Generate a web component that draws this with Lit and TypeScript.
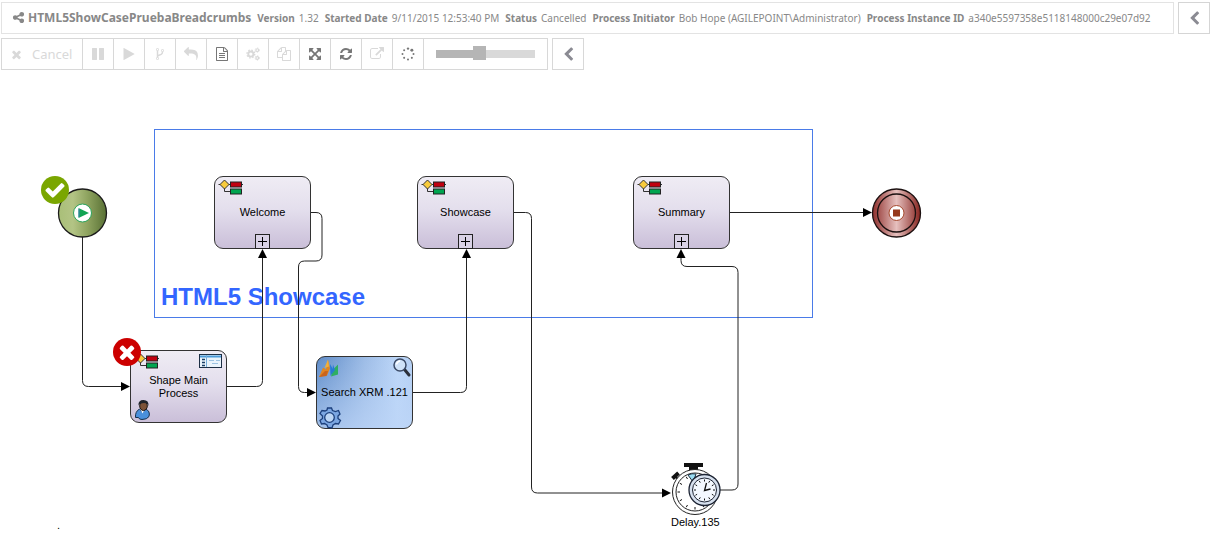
import { LitElement, html, css, svg, nothing } from "lit";
import { customElement, property, state } from "lit/decorators.js";
import { classMap } from "lit/directives/class-map.js";

const GLYPHS: Record<string, unknown> = {
  share: svg`<path d="M1344 1024q133 0 226.500 93.500t93.500 226.500-93.500 226.500-226.500 93.500-226.500-93.500-93.500-226.500q0-12 2-34l-360-180q-92 86-218 86-133 0-226.500-93.500t-93.500-226.500 93.500-226.500 226.500-93.500q126 0 218 86l360-180q-2-22-2-34 0-133 93.500-226.500t226.500-93.500 226.500 93.500 93.500 226.500-93.500 226.500-226.500 93.500q-126 0-218-86l-360 180q2 22 2 34t-2 34l360 180q92-86 218-86z"/>`,
  times: svg`<path d="M1490 1322q0 40-28 68l-136 136q-28 28-68 28t-68-28l-294-294-294 294q-28 28-68 28t-68-28l-136-136q-28-28-28-68t28-68l294-294-294-294q-28-28-28-68t28-68l136-136q28-28 68-28t68 28l294 294 294-294q28-28 68-28t68 28l136 136q28 28 28 68t-28 68l-294 294 294 294q28 28 28 68z"/>`,
  pause: svg`<path d="M1664 192v1408q0 26-19 45t-45 19h-512q-26 0-45-19t-19-45v-1408q0-26 19-45t45-19h512q26 0 45 19t19 45zm-896 0v1408q0 26-19 45t-45 19h-512q-26 0-45-19t-19-45v-1408q0-26 19-45t45-19h512q26 0 45 19t19 45z"/>`,
  play: svg`<path d="M1576 927l-1328 738q-23 13-39.500 3t-16.500-36v-1472q0-26 16.500-36t39.500 3l1328 738q23 13 23 31t-23 31z"/>`,
  fork: svg`<path d="M672 1472q0-40-28-68t-68-28-68 28-28 68 28 68 68 28 68-28 28-68zm0-1152q0-40-28-68t-68-28-68 28-28 68 28 68 68 28 68-28 28-68zm640 128q0-40-28-68t-68-28-68 28-28 68 28 68 68 28 68-28 28-68zm96 0q0 52-26 96.500t-70 69.500q-2 287-226 414-67 38-203 81-128 40-169.500 71t-41.500 100v26q44 25 70 69.500t26 96.500q0 80-56 136t-136 56-136-56-56-136q0-52 26-96.500t70-69.500v-820q-44-25-70-69.500t-26-96.500q0-80 56-136t136-56 136 56 56 136q0 52-26 96.500t-70 69.500v497q54-26 154-57 55-17 87.500-29.500t70.500-31 59-39.500 40.500-51 28-69.500 8.500-91.500q-44-25-70-69.500t-26-96.500q0-80 56-136t136-56 136 56 56 136z"/>`,
  reply: svg`<path d="M1792 1120q0 166-127 451-3 7-10.500 24t-13.500 30-13 22q-12 17-28 17-15 0-23.500-10t-8.500-25q0-9 2.500-26.500t2.500-23.500q5-68 5-123 0-112-19.500-200.500t-54-153.500-89-112-115-78-138.500-49-153.500-24.500-166.500-7.500h-224v256q0 26-19 45t-45 19-45-19l-512-512q-19-19-19-45t19-45l512-512q19-19 45-19t45 19 19 45v256h224q713 0 875 403 53 134 53 333z"/>`,
  file: svg`<path d="M1596 380q28 28 48 76t20 88v1152q0 40-28 68t-68 28h-1344q-40 0-68-28t-28-68v-1600q0-40 28-68t68-28h896q40 0 88 20t76 48zm-444-244v376h376q-10-29-22-41l-313-313q-12-12-41-22zm384 1528v-1024h-416q-40 0-68-28t-28-68v-416h-768v1536h1280zm-1024-864q0-14 9-23t23-9h704q14 0 23 9t9 23v64q0 14-9 23t-23 9h-704q-14 0-23-9t-9-23v-64zm736 224q14 0 23 9t9 23v64q0 14-9 23t-23 9h-704q-14 0-23-9t-9-23v-64q0-14 9-23t23-9h704zm0 256q14 0 23 9t9 23v64q0 14-9 23t-23 9h-704q-14 0-23-9t-9-23v-64q0-14 9-23t23-9h704z"/>`,
  cogs: svg`<g fill="none" stroke="currentColor">
    <circle cx="620" cy="900" r="330" stroke-width="240"/><circle cx="620" cy="900" r="500" stroke-width="170" stroke-dasharray="196 196.700"/>
    <circle cx="1440" cy="400" r="175" stroke-width="150"/><circle cx="1440" cy="400" r="280" stroke-width="100" stroke-dasharray="147 146.200"/>
    <circle cx="1440" cy="1400" r="175" stroke-width="150"/><circle cx="1440" cy="1400" r="280" stroke-width="100" stroke-dasharray="147 146.200"/></g>`,
  files: svg`<path d="M1696 384q40 0 68 28t28 68v1216q0 40-28 68t-68 28h-960q-40 0-68-28t-28-68v-288h-544q-40 0-68-28t-28-68v-672q0-40 20-88t48-76l408-408q28-28 76-48t88-20h416q40 0 68 28t28 68v328q68-40 128-40h416zm-544 213l-299 299h299v-299zm-640-384l-299 299h299v-299zm196 647l316-316v-416h-384v416q0 40-28 68t-68 28h-416v640h512v-256q0-40 20-88t48-76zm956 804v-1152h-384v416q0 40-28 68t-68 28h-416v640h896z"/>`,
  expand: svg`<path d="M1411 541l-355 355 355 355 144-144q29-31 70-14 39 17 39 59v448q0 26-19 45t-45 19h-448q-42 0-59-40-17-39 14-69l144-144-355-355-355 355 144 144q31 30 14 69-17 40-59 40h-448q-26 0-45-19t-19-45v-448q0-42 40-59 39-17 69 14l144 144 355-355-355-355-144 144q-19 19-45 19-12 0-24-5-40-17-40-59v-448q0-26 19-45t45-19h448q42 0 59 40 17 39-14 69l-144 144 355 355 355-355-144-144q-31-30-14-69 17-40 59-40h448q26 0 45 19t19 45v448q0 42-39 59-13 5-25 5-26 0-45-19z"/>`,
  refresh: svg`<path d="M1639 1056q0 5-1 7-64 268-268 434.500t-478 166.500q-146 0-282.500-55t-243.500-157l-129 129q-19 19-45 19t-45-19-19-45v-448q0-26 19-45t45-19h448q26 0 45 19t19 45-19 45l-137 137q71 66 161 102t187 36q134 0 250-65t186-179q11-17 53-117 8-23 30-23h192q13 0 22.500 9.500t9.500 22.500zm25-800v448q0 26-19 45t-45 19h-448q-26 0-45-19t-19-45 19-45l138-138q-148-137-349-137-134 0-250 65t-186 179q-11 17-53 117-8 23-30 23h-199q-13 0-22.500-9.500t-9.500-22.500v-7q65-268 270-434.500t480-166.500q146 0 284 55.500t245 156.500l130-129q19-19 45-19t45 19 19 45z"/>`,
  external: svg`<path d="M1408 928v320q0 119-84.500 203.500t-203.500 84.500h-832q-119 0-203.500-84.500t-84.500-203.500v-832q0-119 84.500-203.500t203.500-84.500h704q14 0 23 9t9 23v64q0 14-9 23t-23 9h-704q-66 0-113 47t-47 113v832q0 66 47 113t113 47h832q66 0 113-47t47-113v-320q0-14 9-23t23-9h64q14 0 23 9t9 23zm384-864v512q0 26-19 45t-45 19-45-19l-176-176-652 652q-10 10-23 10t-23-10l-114-114q-10-10-10-23t10-23l652-652-176-176q-19-19-19-45t19-45 45-19h512q26 0 45 19t19 45z"/>`,
  spinner: svg`<circle cx="896" cy="200" r="150"/><circle cx="1390" cy="402" r="190"/><circle cx="1600" cy="896" r="130"/><circle cx="1390" cy="1390" r="130"/><circle cx="896" cy="1600" r="130"/><circle cx="402" cy="1390" r="130"/><circle cx="192" cy="896" r="130"/><circle cx="402" cy="402" r="130"/>`,
  chevron: svg`<path d="M1427 301l-531 531 531 531q19 19 19 45t-19 45l-166 166q-19 19-45 19t-45-19l-742-742q-19-19-19-45t19-45l742-742q19-19 45-19t45 19l166 166q19 19 19 45t-19 45z"/>`,
  check: svg`<path d="M1671 566q0 40-28 68l-724 724-136 136q-28 28-68 28t-68-28l-136-136-362-362q-28-28-28-68t28-68l136-136q28-28 68-28t68 28l294 295 656-657q28-28 68-28t68 28l136 136q28 28 28 68z"/>`,
};

const glyph = (name: string) =>
  html`<svg class="glyph" viewBox="0 0 1792 1792" aria-hidden="true">${GLYPHS[name]}</svg>`;

interface Tool {
  icon: string;
  title: string;
  text?: string;
  off?: boolean;
}

const TOOLS: Tool[] = [
  { icon: "times", title: "Cancel", text: "Cancel", off: true },
  { icon: "pause", title: "Suspend", off: true },
  { icon: "play", title: "Resume", off: true },
  { icon: "fork", title: "Migrate", off: true },
  { icon: "reply", title: "Rollback", off: true },
  { icon: "file", title: "Details" },
  { icon: "cogs", title: "Settings", off: true },
  { icon: "files", title: "Copy", off: true },
  { icon: "expand", title: "Fit" },
  { icon: "refresh", title: "Refresh" },
  { icon: "external", title: "Open", off: true },
  { icon: "spinner", title: "Status" },
];

const FACTS: [string, string][] = [
  ["Version", "1.32"],
  ["Started Date", "9/11/2015 12:53:40 PM"],
  ["Status", "Cancelled"],
  ["Process Initiator", "Bob Hope (AGILEPOINT\\Administrator)"],
  ["Process Instance ID", "a340e5597358e5118148000c29e07d92"],
];

interface Activity {
  label: string;
  x: number;
  y: number;
  kind: "sub" | "form" | "search";
}

const ACTIVITIES: Activity[] = [
  { label: "Welcome", x: 214, y: 106, kind: "sub" },
  { label: "Showcase", x: 417, y: 106, kind: "sub" },
  { label: "Summary", x: 633, y: 106, kind: "sub" },
  { label: "Shape Main Process", x: 130, y: 280, kind: "form" },
  { label: "Search XRM .121", x: 316, y: 286, kind: "search" },
];

const LINKS = [
  "M82.500 167V310.500q0 6 6 6H122",
  "M227 316.500H256.500q6 0 6-6V187",
  "M311 142.500H316q6 0 6 6V185q0 6-6 6H304.500q-6 0-6 6V316.500q0 6 6 6H308",
  "M413 322.500H460.500q6 0 6-6V187",
  "M514 142.500H525.500q6 0 6 6V417q0 6 6 6H663",
  "M720 420H732q6 0 6-6V202.500q0-6-6-6H687q-6 0-6-6V187",
  "M730 142.500H864",
];

const flowMark = svg`<path class="ink" d="M4.500 8.500H29M10.500 8.500V15.500H16"/>
  <path d="M10.500 4L15 8.500 10.500 13 6 8.500z" fill="#f8cb3c" stroke="#333"/>
  <rect x="16.500" y="6" width="11" height="5" fill="#c00010" stroke="#222"/>
  <rect x="16.500" y="13" width="11" height="5" fill="#00a550" stroke="#222"/>`;

const formMark = svg`<rect x="69.500" y="4.500" width="22" height="13" fill="#eaf4fc" stroke="#1d2f45"/>
  <path d="M70 6.500H91" stroke="#4b9bd8" stroke-width="2"/>
  <path d="M72 9.500H75M72 12.500H75M72 15.500H75" stroke="#1b3f66" stroke-width="1.500"/>
  <path d="M76.500 5V17" stroke="#76aeda"/><path d="M79 10.500H84M86 10.500H90M82 13.500H88" stroke="#9cc3e2"/>
  <path d="M5.500 67.500q-.5-6 4-8.500l3 3 3-3q5 2 3.500 7.500-2 3-7 3-3 0-3.500-2z" fill="#4a90dc" stroke="#16304d"/>
  <path d="M10.500 59l2 4.500 2.500-4.500z" fill="#fff"/>
  <ellipse cx="13.500" cy="56" rx="3.800" ry="4.500" fill="#7d5338" stroke="#1c1410"/>
  <path d="M8.500 55.500q-.5-5.500 5-5.500 5.500 0 5 6-1-3-4.500-3-4 0-5.500 2.500z" fill="#20242b"/>`;

const searchMark = svg`<path d="M3 21L7 11.500l3 2L12 3.500l2 9-3 7z" fill="#e2861f"/><path d="M3 21L9 15l3 0-1.500 5z" fill="#c9641c"/>
  <path d="M8.500 12L12 3.500l1 7z" fill="#f2b03a"/><path d="M14 8l4 7-3.500 5z" fill="#2779d6"/>
  <path d="M15 20.500l2-7 5-5V18.500z" fill="#2fae62"/><path d="M17 8.500L19 14l-3 4z" fill="#2779d6"/>
  <path d="M88.500 13.500l4.500 5.500" stroke="#2b2f3a" stroke-width="3" stroke-linecap="round"/>
  <circle cx="84" cy="9" r="6" fill="#cfe2f8" stroke="#3b4a66" stroke-width="1.500"/>
  <path d="M80.500 8.500q.5-3 3.500-3.500" fill="none" stroke="#fff" stroke-width="1.500"/>
  <path d="M11.500 52l4 0 1 2.500 3 1 3-1 1.500 3.500-2 2 0 2.500 2.500 2-2 3.500-3-.5-2.500 1.500-1 3-4-.5-1-2.500-2.500-1.500-3 .5-1.500-3.500 2.500-2 0-2.500-2.500-2.500 2-3 3 .5 2-1z" fill="#7ba6e2" stroke="#1c3f7c" stroke-width="1.300"/>
  <circle cx="13.500" cy="61.500" r="4.800" fill="#bcd5f5" stroke="#1c3f7c" stroke-width="1.300"/>`;

const MARKS = { sub: flowMark, form: svg`${flowMark}${formMark}`, search: searchMark };

@customElement("process-bar")
class ProcessBar extends LitElement {
  static styles = css`
    :host { display: flex; gap: 4px; align-items: stretch; }
    .info {
      flex: 1; display: flex; align-items: center; gap: 6px; min-width: 0; min-height: 32px;
      box-sizing: border-box; padding: 0 10px; border: 1px solid #e3e3e3; white-space: nowrap;
      color: #888;
    }
    .name { margin: 0; font-size: 12px; font-weight: 700; line-height: 20px; color: #888; }
    .name .glyph { width: 13px; height: 13px; margin-right: 3px; vertical-align: -2px; }
    .glyph { fill: currentColor; }
    .fact { display: flex; align-items: baseline; gap: 4px; font-size: 10px; line-height: 20px; }
    .key { font-weight: 700; }
    .fold {
      width: 32px; padding: 0; border: 1px solid #d5d5d5; background: #fff; color: #8b8b93;
      display: grid; place-items: center;
    }
    .fold .glyph { width: 15px; height: 15px; }
  `;

  render() {
    return html`
      <div class="info">
        <h1 class="name">${glyph("share")}HTML5ShowCasePruebaBreadcrumbs</h1>
        ${FACTS.map(([k, v]) => html`<span class="fact"><span class="key">${k}</span><span>${v}</span></span>`)}
      </div>
      <button class="fold" aria-label="Collapse details">${glyph("chevron")}</button>
    `;
  }
}

@customElement("tool-bar")
class ToolBar extends LitElement {
  @state() private zoom = 43;

  static styles = css`
    :host { display: flex; gap: 4px; }
    .strip { display: flex; }
    .tool, .zoom, .fold {
      box-sizing: border-box; height: 32px; border: 1px solid #d8d8d8; background: #fff;
      display: flex; align-items: center; justify-content: center;
    }
    .tool, .fold { width: 32px; padding: 0; font: inherit; font-size: 13px; color: #777; }
    .tool + .tool, .zoom { margin-left: -1px; }
    .tool.wide { width: 82px; gap: 9px; justify-content: flex-start; padding: 0 8px; }
    .wide .glyph { width: 13px; height: 13px; }
    .tool.off { color: #d9d9d9; }
    .glyph { width: 14px; height: 14px; fill: currentColor; }
    .fold { color: #8b8b93; }
    .fold .glyph { width: 15px; height: 15px; }
    .zoom { width: 125px; padding: 0 12px; }
    .range {
      appearance: none; width: 100%; height: 14px; margin: 0; background: none;
    }
    .range::-webkit-slider-runnable-track {
      height: 8px; background: linear-gradient(90deg, #b5b5b5 43%, #d9d9d9 43%);
    }
    .range::-webkit-slider-thumb {
      appearance: none; width: 13px; height: 14px; margin-top: -4px; background: #b5b5b5;
    }
  `;

  render() {
    return html`
      <div class="strip">
        ${TOOLS.map(
          (t) => html`<button
            class=${classMap({ tool: true, wide: !!t.text, off: !!t.off })}
            aria-label=${t.title}
            ?disabled=${!!t.off}
          >${glyph(t.icon)}${t.text ? html`<span>${t.text}</span>` : nothing}</button>`
        )}
        <div class="zoom">
          <input class="range" type="range" aria-label="Zoom" min="0" max="100" .value=${String(this.zoom)}
            @input=${(e: Event) => (this.zoom = Number((e.target as HTMLInputElement).value))} />
        </div>
      </div>
      <button class="fold" aria-label="Collapse toolbar">${glyph("chevron")}</button>
    `;
  }
}

@customElement("flow-activity")
class FlowActivity extends LitElement {
  @property({ attribute: false }) item!: Activity;

  static styles = css`
    :host { display: block; }
    .card {
      position: relative; box-sizing: border-box; width: 97px; height: 73px; border: 1px solid #333;
      border-radius: 9px; background: linear-gradient(#efecf4, #e4dfed 45%, #cabfd9);
      display: grid; place-items: center; text-align: center;
    }
    .search {
      background: linear-gradient(180deg, transparent, rgba(190, 214, 248, .7)),
        linear-gradient(90deg, #5f8cc8, #9dbce6 50%, #bcd6f8 85%, #b5d0f4);
    }
    .art { position: absolute; inset: -1px; width: 97px; height: 73px; }
    .ink { fill: none; stroke: #333; }
    .label { position: relative; max-width: 90px; font-size: 11px; line-height: 13px; color: #000; }
    .narrow { max-width: 70px; }
    .open {
      position: absolute; left: 40px; bottom: -1px; width: 15px; height: 15px; box-sizing: border-box; padding: 0;
      border: 1px solid #222; background: #d9d2e6; display: grid; place-items: center;
    }
    .plus { width: 9px; height: 9px; fill: none; stroke: #000; }
  `;

  render() {
    const { label, kind } = this.item;
    return html`
      <div class=${classMap({ card: true, search: kind === "search" })}>
        <svg class="art" viewBox="0 0 97 73" aria-hidden="true">${MARKS[kind]}</svg>
        <span class=${classMap({ label: true, narrow: kind === "form" })}>${label}</span>
        ${kind === "sub"
          ? html`<button class="open" aria-label=${`Open ${label}`}>
              <svg class="plus" viewBox="0 0 9 9"><path d="M0 4.500H9M4.500 0V9"/></svg>
            </button>`
          : nothing}
      </div>
    `;
  }
}

@customElement("flow-canvas")
class FlowCanvas extends LitElement {
  static styles = css`
    :host {
      display: block; position: relative; min-height: 480px;
      font-family: "Liberation Sans", Arial, sans-serif;
    }
    .group {
      position: absolute; left: 154px; top: 59px; width: 659px; height: 189px; box-sizing: border-box;
      border: 1px solid #4a7be8; display: flex; align-items: flex-end; padding: 6px;
    }
    .heading { margin: 0; font-size: 24px; line-height: 28px; font-weight: 700; color: #3366ff; }
    .wires { position: absolute; inset: 0; width: 100%; height: 100%; overflow: visible; }
    .wire { fill: none; stroke: #222; }
    .node { position: absolute; }
    .badge { position: absolute; width: 28px; height: 28px; border-radius: 50%; display: grid; place-items: center; color: #fff; }
    .badge .glyph { width: 22px; height: 22px; fill: currentColor; }
    .ok { left: 41px; top: 106px; background: #7aa600; }
    .bad { left: 113px; top: 268px; background: #cc0000; }
    .caption { position: absolute; font-size: 11px; line-height: 13px; color: #000; }
    .delay { left: 671px; top: 446px; }
    .dot { left: 57px; top: 449px; }
  `;

  private ticks(cx: number, cy: number, r1: number, r2: number) {
    return Array.from({ length: 12 }, (_, i) => {
      const a = (i * Math.PI) / 6;
      const s = Math.sin(a);
      const c = Math.cos(a);
      return svg`<path d=${`M${cx + r1 * s} ${cy + r1 * c}L${cx + r2 * s} ${cy + r2 * c}`} stroke="#111"/>`;
    });
  }

  render() {
    return html`
      <section class="group"><h2 class="heading">HTML5 Showcase</h2></section>
      <svg class="wires" aria-hidden="true">
        <defs>
          <marker id="tip" viewBox="0 0 9 10" refX="1" refY="5" markerWidth="9" markerHeight="10" orient="auto" markerUnits="userSpaceOnUse">
            <path d="M0 .5L9 5 0 9.500z"/>
          </marker>
          <linearGradient id="green"><stop offset="0" stop-color="#a9bf78"/><stop offset=".3" stop-color="#b3c485"/><stop offset=".6" stop-color="#8fa460"/><stop offset="1" stop-color="#587034"/></linearGradient>
          <linearGradient id="red"><stop offset="0" stop-color="#8f2f2c"/><stop offset=".5" stop-color="#e6c0be"/><stop offset="1" stop-color="#86241f"/></linearGradient>
        </defs>
        ${LINKS.map((d) => svg`<path class="wire" d=${d} marker-end="url(#tip)"/>`)}
        <circle cx="82.500" cy="143" r="24" fill="url(#green)" stroke="#1b1b1b" stroke-width="1.300"/>
        <circle cx="82.500" cy="143" r="9" fill="#fff" stroke="#2ba55d"/>
        <path d="M78.500 138L89 143 78.500 148z" fill="#10a452"/><path d="M79 139V147" stroke="#3f7bb8"/>
        <circle cx="896.500" cy="143" r="24" fill="url(#red)" stroke="#1b1010" stroke-width="1.300"/>
        <circle cx="896.500" cy="143" r="19" fill="none" stroke="#1b1010" stroke-width="1.300"/>
        <circle cx="896.500" cy="143" r="7.500" fill="#fff" stroke="#a5482c"/>
        <rect x="893" y="139.500" width="7" height="7" fill="#963a1c"/>
        <g>
          <rect x="684" y="393" width="19" height="4" fill="#111"/><rect x="689" y="396" width="9" height="5" fill="#111"/>
          <path d="M672.500 408.500l6-5.500" stroke="#111" stroke-width="4"/><path d="M676 407l2.500 3" stroke="#111" stroke-width="2"/>
          <circle cx="695" cy="422" r="22.500" fill="#fff" stroke="#222"/>
          <circle cx="695" cy="422" r="19" fill="#fff" stroke="#222"/>
          ${this.ticks(695, 422, 15, 17.5)}
          <path d="M688 405q4-2 8-1l-3 8z" fill="#9adcf2" stroke="#234"/>
          <circle cx="704.500" cy="420" r="15.500" fill="#d6e0ee" stroke="#1d2433" stroke-width="1.300"/>
          <circle cx="704.500" cy="420" r="12" fill="#f3f8ff" stroke="#1d2433"/>
          ${this.ticks(704.5, 420, 8.5, 10.5)}
          <path d="M706.500 413L704.500 420.500 710.500 419" fill="none" stroke="#111" stroke-width="1.300"/>
        </g>
      </svg>
      ${ACTIVITIES.map(
        (a) => html`<flow-activity class="node" style=${`left:${a.x}px;top:${a.y}px`} .item=${a}></flow-activity>`
      )}
      <span class="badge ok">${glyph("check")}</span>
      <span class="badge bad">${glyph("times")}</span>
      <span class="caption delay">Delay.135</span>
      <span class="caption dot">.</span>
    `;
  }
}

@customElement("app-root")
class AppRoot extends LitElement {
  static styles = css`
    :host {
      display: block; background: #fff; min-height: 100vh;
      font-family: "Noto Sans", "Open Sans", sans-serif;
    }
    .top { display: flex; flex-direction: column; gap: 4px; padding: 2px 4px 0 1px; }
  `;

  render() {
    return html`
      <header class="top"><process-bar></process-bar><tool-bar></tool-bar></header>
      <main><flow-canvas></flow-canvas></main>
    `;
  }
}
